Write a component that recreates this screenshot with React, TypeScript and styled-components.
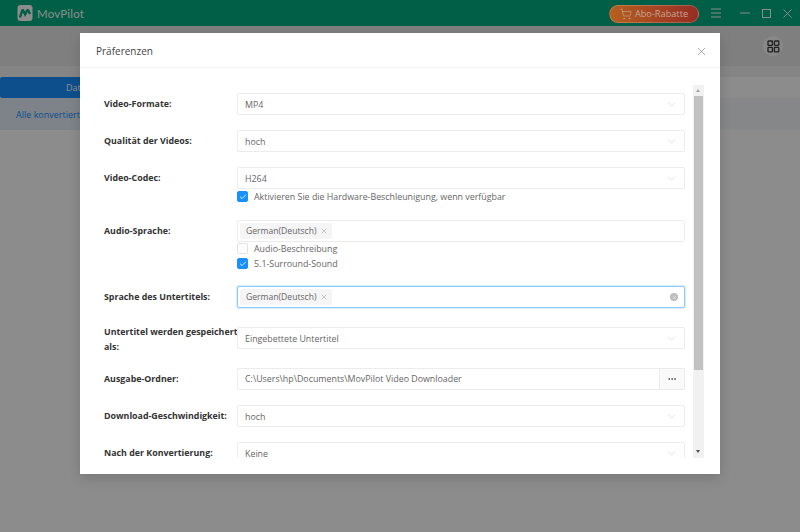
import styled, { createGlobalStyle } from "styled-components";
import { Check, ChevronDown, Ellipsis, ShoppingCart, X } from "lucide-react";

const GlobalStyle = createGlobalStyle`
  html, body { margin: 0; padding: 0; height: 100%; overflow: hidden; }
  body { font-family: "Open Sans", "Liberation Sans", sans-serif; background: #fff; }
  #root { height: 100%; }
`;

const Page = styled.div`
  position: relative;
  width: 800px;
  height: 532px;
  display: flex;
  flex-direction: column;
  overflow: hidden;
`;

const Header = styled.header`
  height: 26px;
  background: #00ad80;
  display: flex;
  align-items: center;
  padding: 0 8px 0 17px;
  flex-shrink: 0;
`;

const Brand = styled.div`
  display: flex;
  align-items: center;
  gap: 4px;
  color: #fff;
  font-family: "Lato", sans-serif;
  font-size: 11.5px;
  letter-spacing: 0.2px;
  margin-right: auto;
`;

const DiscountButton = styled.div`
  position: relative;
  z-index: 2;
  width: 90px;
  height: 18px;
  margin-top: 1px;
  box-sizing: border-box;
  border: 1px solid rgba(255, 255, 255, 0.2);
  border-radius: 9px;
  background: linear-gradient(90deg, #b5601f, #962d25);
  display: flex;
  align-items: center;
  justify-content: center;
  gap: 3px;
  color: #c4a696;
  font-size: 9.2px;
  margin-right: 12px;
`;

const WindowButtons = styled.div`
  display: flex;
  align-items: center;
  gap: 12px;
  color: #fff;
`;

const MenuSlot = styled.span`
  display: flex;
  margin-right: 7px;
`;

const Toolbar = styled.div`
  height: 40px;
  background: #e8e8e8;
  display: flex;
  align-items: center;
  justify-content: flex-end;
  padding-right: 17px;
  flex-shrink: 0;
`;

const GridButton = styled.div`
  width: 20px;
  height: 20px;
  border-radius: 50%;
  background: #f7f7f7;
  display: flex;
  align-items: center;
  justify-content: center;
`;

const Strip = styled.div`
  height: 11px;
  background: #f2f2f2;
`;

const Tabs = styled.div`
  height: 21px;
  width: 100%;
  background: #fff;
`;

const ActiveTab = styled.div`
  width: 200px;
  height: 21px;
  background: #1890ff;
  border-radius: 2px;
  color: #fff;
  font-size: 9px;
  line-height: 21px;
  padding-left: 66px;
  box-sizing: border-box;
`;

const FilterRow = styled.div`
  height: 32px;
  background: linear-gradient(90deg, #e3eff9 0, #e3eff9 100px, #f5f6f7 700px);
  color: #1890ff;
  font-size: 9px;
  line-height: 34px;
  padding-left: 16px;
`;

const Mask = styled.div`
  position: absolute;
  z-index: 1;
  inset: 0;
  background: rgba(0, 0, 0, 0.45);
`;

const Modal = styled.div`
  position: absolute;
  z-index: 3;
  left: 80px;
  top: 33px;
  width: 640px;
  height: 441px;
  background: #fff;
  box-shadow: 0 4px 12px rgba(0, 0, 0, 0.15);
  display: flex;
  flex-direction: column;
`;

const ModalHead = styled.div`
  height: 35px;
  box-sizing: border-box;
  border-bottom: 1px solid #f4f4f4;
  display: flex;
  align-items: center;
  justify-content: space-between;
  padding: 2px 12px 0 16px;
  flex-shrink: 0;
  color: #444;
  font-size: 10px;
`;

const ModalBody = styled.div`
  position: relative;
  margin: 17px 16px 16px;
  flex: 1;
  overflow: hidden;
  padding: 8px 0 0 8px;
  display: flex;
  flex-direction: column;
`;

const Row = styled.div<{ $gap: number }>`
  display: flex;
  margin-bottom: ${(p) => p.$gap}px;
  width: 581px;
  flex-shrink: 0;
`;

const Label = styled.div`
  width: 133px;
  flex-shrink: 0;
  font-size: 8.85px;
  font-weight: 700;
  line-height: 15px;
  color: #333;
  padding-top: 4px;
`;

const TightLabel = styled(Label)`
  margin-top: -6px;
  margin-bottom: 2px;
  white-space: nowrap;
`;

const Field = styled.div`
  flex: 1;
  display: flex;
  flex-direction: column;
`;

const Box = styled.div<{ $focus?: boolean }>`
  height: 22px;
  box-sizing: border-box;
  border: 1px solid ${(p) => (p.$focus ? "#8ccbff" : "#ececec")};
  box-shadow: ${(p) => (p.$focus ? "0 0 0 1px #d8edff" : "none")};
  border-radius: 2px;
  display: flex;
  align-items: center;
  padding: 1px 7px 0;
  font-size: 8.85px;
  color: #666;
  background: #fff;
`;

const BoxText = styled.span`
  margin-right: auto;
`;

const Tag = styled.span`
  display: inline-flex;
  align-items: center;
  gap: 3px;
  height: 16px;
  padding: 0 4px 0 6px;
  margin: -1px 0 0 -5px;
  background: #f5f5f5;
  border-radius: 2px;
  font-size: 8.6px;
  color: #666;
`;

const PathBox = styled(Box)`
  padding: 0 0 0 7px;
`;

const PathButton = styled.div`
  width: 24px;
  height: 20px;
  border-left: 1px solid #ececec;
  background: #fafafa;
  display: flex;
  align-items: center;
  justify-content: center;
  color: #444;
`;

const CheckLine = styled.div<{ $shift?: number }>`
  display: flex;
  align-items: center;
  gap: 6px;
  height: 15px;
  margin-top: ${(p) => p.$shift ?? 0}px;
  font-size: 8.85px;
  color: #666;
`;

const CheckSquare = styled.span<{ $on?: boolean }>`
  width: 11px;
  height: 11px;
  box-sizing: border-box;
  border-radius: 2px;
  background: ${(p) => (p.$on ? "#1890ff" : "#fff")};
  border: 1px solid ${(p) => (p.$on ? "#1890ff" : "#e2e2e2")};
  display: flex;
  align-items: center;
  justify-content: center;
  color: #fff;
`;

const ClearDot = styled.span`
  width: 8px;
  height: 8px;
  border-radius: 50%;
  background: #bdbdbd;
  display: flex;
  align-items: center;
  justify-content: center;
  color: #fff;
  margin: -1px -1px 0 0;
`;

const ScrollTrack = styled.div`
  position: absolute;
  right: 0;
  top: 0;
  width: 11px;
  height: 100%;
  background: #f1f1f1;
`;

const ScrollThumb = styled.div`
  position: absolute;
  left: 1px;
  right: 1px;
  top: 11px;
  height: 274px;
  background: #c1c1c1;
`;

const ArrowUp = styled.span`
  position: absolute;
  left: 3px;
  top: 4px;
  border-left: 2.5px solid transparent;
  border-right: 2.5px solid transparent;
  border-bottom: 3px solid #a3a3a3;
`;

const ArrowDown = styled.span`
  position: absolute;
  left: 3px;
  bottom: 5px;
  border-left: 2.5px solid transparent;
  border-right: 2.5px solid transparent;
  border-top: 3px solid #505050;
`;

const Chevron = () => <ChevronDown size={13} color="#c8c8c8" strokeWidth={1} style={{ margin: "-1px -1px 0 0" }} />;

const Logo = () => (
  <svg width="16" height="16" viewBox="0 0 15 16">
    <rect width="15" height="16" rx="3" fill="#fff" />
    <path d="M2.5 12.5 L4.6 6 Q5.2 4.6 6 6 L7.6 9.4 L9.6 5.6 Q10.4 4.6 11 5.8 L12.6 9" fill="none" stroke="#00ad80" strokeWidth="2.4" />
  </svg>
);

const GridIcon = () => (
  <svg width="13" height="13" viewBox="0 0 13 13" fill="none" stroke="#3a3a3a" strokeWidth="1.3">
    <rect x="1" y="1" width="4.4" height="4.4" rx="0.6" />
    <rect x="7.4" y="1" width="4.4" height="4.4" rx="0.6" />
    <rect x="1" y="7.4" width="4.4" height="4.4" rx="0.6" />
    <rect x="7.4" y="7.4" width="4.4" height="4.4" rx="0.6" />
  </svg>
);

const MenuIcon = () => (
  <svg width="10" height="10" viewBox="0 0 10 10" stroke="#fff" strokeWidth="1.2">
    <path d="M0 1H10M0 5H10M0 9H10" />
  </svg>
);

export default function App() {
  return (
    <Page>
      <GlobalStyle />
      <Header>
        <Brand>
          <Logo />
          MovPilot
        </Brand>
        <DiscountButton>
          <ShoppingCart size={12} strokeWidth={1.3} />
          Abo-Rabatte
        </DiscountButton>
        <WindowButtons>
          <MenuSlot>
            <MenuIcon />
          </MenuSlot>
          <svg width="10" height="10" viewBox="0 0 10 10" stroke="#fff" fill="none">
            <path d="M0 5H10" />
          </svg>
          <svg width="9" height="9" viewBox="0 0 9 9" stroke="#fff" fill="none">
            <rect x="0.5" y="0.5" width="8" height="8" />
          </svg>
          <svg width="9" height="9" viewBox="0 0 9 9" stroke="#fff" fill="none">
            <path d="M0.5 0.5L8.5 8.5M8.5 0.5L0.5 8.5" />
          </svg>
        </WindowButtons>
      </Header>
      <Toolbar>
        <GridButton>
          <GridIcon />
        </GridButton>
      </Toolbar>
      <Strip />
      <Tabs>
        <ActiveTab>Dateien</ActiveTab>
      </Tabs>
      <FilterRow>Alle konvertiert</FilterRow>
      <Mask />
      <Modal>
        <ModalHead>
          Präferenzen
          <X size={13} color="#666" strokeWidth={1} />
        </ModalHead>
        <ModalBody>
          <Row $gap={15}>
            <Label>Video-Formate:</Label>
            <Field>
              <Box>
                <BoxText>MP4</BoxText>
                <Chevron />
              </Box>
            </Field>
          </Row>
          <Row $gap={15}>
            <Label>Qualität der Videos:</Label>
            <Field>
              <Box>
                <BoxText>hoch</BoxText>
                <Chevron />
              </Box>
            </Field>
          </Row>
          <Row $gap={16}>
            <Label>Video-Codec:</Label>
            <Field>
              <Box>
                <BoxText>H264</BoxText>
                <Chevron />
              </Box>
              <CheckLine>
                <CheckSquare $on>
                  <Check size={8} strokeWidth={2.5} />
                </CheckSquare>
                Aktivieren Sie die Hardware-Beschleunigung, wenn verfügbar
              </CheckLine>
            </Field>
          </Row>
          <Row $gap={15}>
            <Label>Audio-Sprache:</Label>
            <Field>
              <Box>
                <Tag>
                  German(Deutsch)
                  <X size={8} color="#888" strokeWidth={1.3} />
                </Tag>
              </Box>
              <CheckLine $shift={-1}>
                <CheckSquare />
                Audio-Beschreibung
              </CheckLine>
              <CheckLine>
                <CheckSquare $on>
                  <Check size={8} strokeWidth={2.5} />
                </CheckSquare>
                5.1-Surround-Sound
              </CheckLine>
            </Field>
          </Row>
          <Row $gap={19}>
            <Label>Sprache des Untertitels:</Label>
            <Field>
              <Box $focus>
                <Tag>
                  German(Deutsch)
                  <X size={8} color="#888" strokeWidth={1.3} />
                </Tag>
                <BoxText />
                <ClearDot>
                  <X size={5} strokeWidth={2} />
                </ClearDot>
              </Box>
            </Field>
          </Row>
          <Row $gap={11}>
            <TightLabel>
              Untertitel werden gespeichert
              <br />
              als:
            </TightLabel>
            <Field>
              <Box>
                <BoxText>Eingebettete Untertitel</BoxText>
                <Chevron />
              </Box>
            </Field>
          </Row>
          <Row $gap={15}>
            <Label>Ausgabe-Ordner:</Label>
            <Field>
              <PathBox>
                <BoxText>C:\Users\hp\Documents\MovPilot Video Downloader</BoxText>
                <PathButton>
                  <Ellipsis size={10} strokeWidth={2} />
                </PathButton>
              </PathBox>
            </Field>
          </Row>
          <Row $gap={15}>
            <Label>Download-Geschwindigkeit:</Label>
            <Field>
              <Box>
                <BoxText>hoch</BoxText>
                <Chevron />
              </Box>
            </Field>
          </Row>
          <Row $gap={15}>
            <Label>Nach der Konvertierung:</Label>
            <Field>
              <Box>
                <BoxText>Keine</BoxText>
                <Chevron />
              </Box>
            </Field>
          </Row>
          <ScrollTrack>
            <ArrowUp />
            <ScrollThumb />
            <ArrowDown />
          </ScrollTrack>
        </ModalBody>
      </Modal>
    </Page>
  );
}
